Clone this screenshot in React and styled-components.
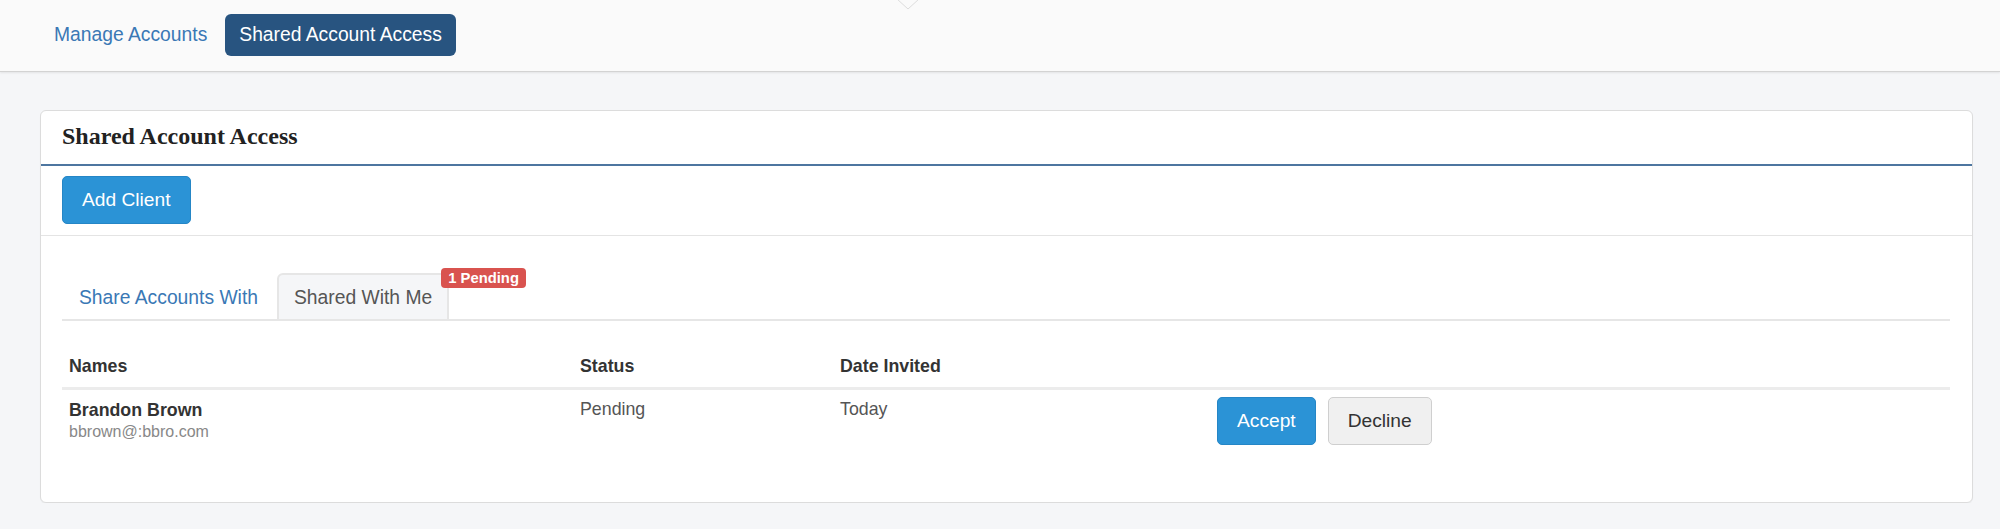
import React, { useState } from 'react';
import styled, { createGlobalStyle } from 'styled-components';

const GlobalStyle = createGlobalStyle`
  html, body {
    margin: 0;
    padding: 0;
    background: #f5f6f8;
    font-family: 'Liberation Sans', Arial, sans-serif;
    color: #333;
  }
  * { box-sizing: border-box; }
`;

const TopBar = styled.nav`
  position: relative;
  height: 72px;
  background: #fafafa;
  border-bottom: 1px solid #d3d3d3;
  box-shadow: 0 1px 2px rgba(0, 0, 0, 0.08);
  display: flex;
  align-items: flex-start;
  gap: 4px;
  padding: 14px 40px 0;
`;

const Notch = styled.svg`
  position: absolute;
  left: 896px;
  top: -1px;
`;

const Pill = styled.a`
  display: block;
  font-size: 19.3px;
  line-height: 28px;
  padding: 7px 14px;
  border-radius: 6px;
  text-decoration: none;
  cursor: pointer;
  color: ${p => (p.$active ? '#fff' : '#3a78b5')};
  background: ${p => (p.$active ? '#285480' : 'transparent')};
`;

const Card = styled.section`
  margin: 38px 27px 0 40px;
  background: #fff;
  border: 1px solid #dcdcdc;
  border-radius: 6px;
  box-shadow: 0 1px 1px rgba(0, 0, 0, 0.04);
`;

const CardHeader = styled.header`
  padding: 11px 21px 13px;
  border-bottom: 2px solid #4d76a0;
`;

const Title = styled.h2`
  margin: 0;
  font-family: 'Liberation Serif', 'Times New Roman', serif;
  font-weight: bold;
  font-size: 24px;
  line-height: 29px;
  color: #222;
`;

const Toolbar = styled.div`
  padding: 10px 21px 11px;
  border-bottom: 1px solid #e4e4e4;
`;

const Button = styled.button`
  font-family: 'Liberation Sans', Arial, sans-serif;
  font-size: 19.2px;
  line-height: 26px;
  padding: 10px 19px;
  border-radius: 5px;
  cursor: pointer;
  border: 1px solid ${p => (p.$variant === 'primary' ? '#2586c6' : '#cfcfcf')};
  background: ${p => (p.$variant === 'primary' ? '#2b93d6' : '#f0f0f0')};
  color: ${p => (p.$variant === 'primary' ? '#fff' : '#333')};
`;

const Body = styled.div`
  padding: 37px 22px 50px 21px;
`;

const Tabs = styled.ul`
  list-style: none;
  margin: 0;
  padding: 0;
  display: flex;
  gap: 2px;
  border-bottom: 2px solid #e6e6e6;
`;

const TabItem = styled.li`
  position: relative;
  margin-bottom: -2px;
`;

const TabLink = styled.a`
  display: block;
  font-size: 19.3px;
  line-height: 27px;
  padding: 9px 15px 8px;
  border: 2px solid ${p => (p.$active ? '#e6e6e6' : 'transparent')};
  border-bottom: 2px solid #e6e6e6;
  border-radius: 6px 6px 0 0;
  background: ${p => (p.$active ? '#f5f6f8' : 'transparent')};
  color: ${p => (p.$active ? '#555' : '#3a78b5')};
  cursor: pointer;
  text-decoration: none;
`;

const Badge = styled.span`
  position: absolute;
  top: -5px;
  left: calc(100% - 8px);
  white-space: nowrap;
  background: #d9534f;
  color: #fff;
  font-weight: bold;
  font-size: 14.8px;
  line-height: 20px;
  padding: 0 7px;
  border-radius: 4px;
`;

const Table = styled.table`
  width: 100%;
  margin-top: 25px;
  border-collapse: collapse;
  font-size: 17.8px;
  line-height: 25px;
  table-layout: fixed;
`;

const Th = styled.th`
  text-align: left;
  font-weight: bold;
  color: #333;
  padding: 8px 7px;
  border-bottom: 3px solid #ececec;
  width: ${p => p.$w || 'auto'};
`;

const Td = styled.td`
  vertical-align: top;
  padding: 7px 7px;
  color: ${p => (p.$muted ? '#555' : '#333')};
`;

const Name = styled.div`
  font-weight: bold;
  line-height: 26px;
`;

const Email = styled.div`
  font-size: 16px;
  line-height: 18px;
  color: #888;
`;

const Actions = styled.div`
  display: flex;
  gap: 12px;
`;

export default function App() {
  const [tab, setTab] = useState('mine');

  return (
    <>
      <GlobalStyle />
      <TopBar>
        <Notch width="24" height="11" viewBox="0 0 24 11">
          <polyline points="1,0 12,10 23,0" fill="#fafafa" stroke="#dcdcdc" strokeWidth="1" />
        </Notch>
        <Pill>Manage Accounts</Pill>
        <Pill $active>Shared Account Access</Pill>
      </TopBar>

      <Card>
        <CardHeader>
          <Title>Shared Account Access</Title>
        </CardHeader>
        <Toolbar>
          <Button $variant="primary">Add Client</Button>
        </Toolbar>
        <Body>
          <Tabs>
            <TabItem>
              <TabLink $active={tab === 'with'} onClick={() => setTab('with')}>
                Share Accounts With
              </TabLink>
            </TabItem>
            <TabItem>
              <TabLink $active={tab === 'mine'} onClick={() => setTab('mine')}>
                Shared With Me
              </TabLink>
              <Badge>1 Pending</Badge>
            </TabItem>
          </Tabs>

          <Table>
            <thead>
              <tr>
                <Th $w="511px">Names</Th>
                <Th $w="260px">Status</Th>
                <Th $w="377px">Date Invited</Th>
                <Th></Th>
              </tr>
            </thead>
            <tbody>
              <tr>
                <Td>
                  <Name>Brandon Brown</Name>
                  <Email>bbrown@:bbro.com</Email>
                </Td>
                <Td $muted>Pending</Td>
                <Td $muted>Today</Td>
                <Td>
                  <Actions>
                    <Button $variant="primary">Accept</Button>
                    <Button>Decline</Button>
                  </Actions>
                </Td>
              </tr>
            </tbody>
          </Table>
        </Body>
      </Card>
    </>
  );
}
